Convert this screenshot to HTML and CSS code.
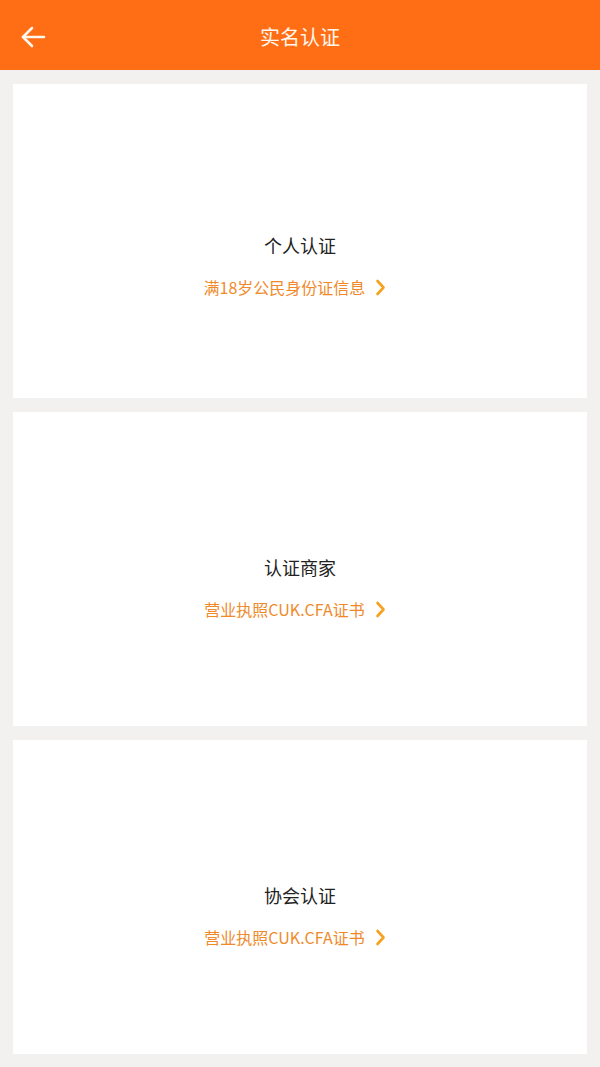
FILE: index.html
```html
<!DOCTYPE html>
<html lang="zh-CN">
<head>
<meta charset="utf-8">
<title>实名认证</title>
<link rel="stylesheet" href="styles.css">
</head>
<body>
<div class="page">
  <header class="topbar">
    <span class="back">
      <svg width="26" height="22" viewBox="0 0 26 22" fill="none" stroke="#fff6ec" stroke-width="2.6" stroke-linecap="round" stroke-linejoin="round">
        <path d="M24 11H3"/>
        <path d="M12 2L3 11L12 20"/>
      </svg>
    </span>
    <h1 class="topbar-title">实名认证</h1>
  </header>
  <main class="list">
    <section class="card card-first">
      <div class="card-title">个人认证</div>
      <div class="card-sub">满18岁公民身份证信息<svg class="chev" width="11" height="17" viewBox="0 0 11 17" fill="none" stroke="#f5a31f" stroke-width="2.6" stroke-linecap="round" stroke-linejoin="round"><path d="M2.5 2L8.5 8.5L2.5 15"/></svg></div>
    </section>
    <section class="card">
      <div class="card-title">认证商家</div>
      <div class="card-sub">营业执照CUK.CFA证书<svg class="chev" width="11" height="17" viewBox="0 0 11 17" fill="none" stroke="#f5a31f" stroke-width="2.6" stroke-linecap="round" stroke-linejoin="round"><path d="M2.5 2L8.5 8.5L2.5 15"/></svg></div>
    </section>
    <section class="card">
      <div class="card-title">协会认证</div>
      <div class="card-sub">营业执照CUK.CFA证书<svg class="chev" width="11" height="17" viewBox="0 0 11 17" fill="none" stroke="#f5a31f" stroke-width="2.6" stroke-linecap="round" stroke-linejoin="round"><path d="M2.5 2L8.5 8.5L2.5 15"/></svg></div>
    </section>
  </main>
</div>
</body>
</html>
```

FILE: styles.css
```css
* { box-sizing: border-box; }
html, body {
  margin: 0;
  padding: 0;
  background: #f2f1ef;
  font-family: "Noto Sans CJK SC", "Noto Sans", sans-serif;
}
.page {
  width: 600px;
  height: 1067px;
  overflow: hidden;
  display: flex;
  flex-direction: column;
}
.topbar {
  height: 70px;
  background: #ff6d14;
  display: flex;
  align-items: center;
  justify-content: center;
  position: relative;
  flex-shrink: 0;
}
.back {
  position: absolute;
  left: 20px;
  top: 26px;
  width: 26px;
  height: 22px;
  display: flex;
}
.topbar-title {
  margin: 0;
  font-size: 20px;
  font-weight: 400;
  color: #fff6ec;
  line-height: 28px;
  margin-top: 4px;
}
.list {
  padding: 14px 13px 13px;
  display: flex;
  flex-direction: column;
  gap: 14px;
}
.card {
  height: 314px;
  background: #ffffff;
  display: flex;
  flex-direction: column;
  align-items: center;
  padding-top: 143px;
}
.card-first {
  padding-top: 149px;
}
.card-title {
  font-size: 18px;
  line-height: 24px;
  color: #222222;
}
.card-sub {
  margin-top: 20px;
  font-size: 16px;
  line-height: 20px;
  color: #f0892a;
  display: flex;
  align-items: center;
  padding-right: 10px;
}
.chev {
  margin-left: 10px;
  display: block;
}
```
